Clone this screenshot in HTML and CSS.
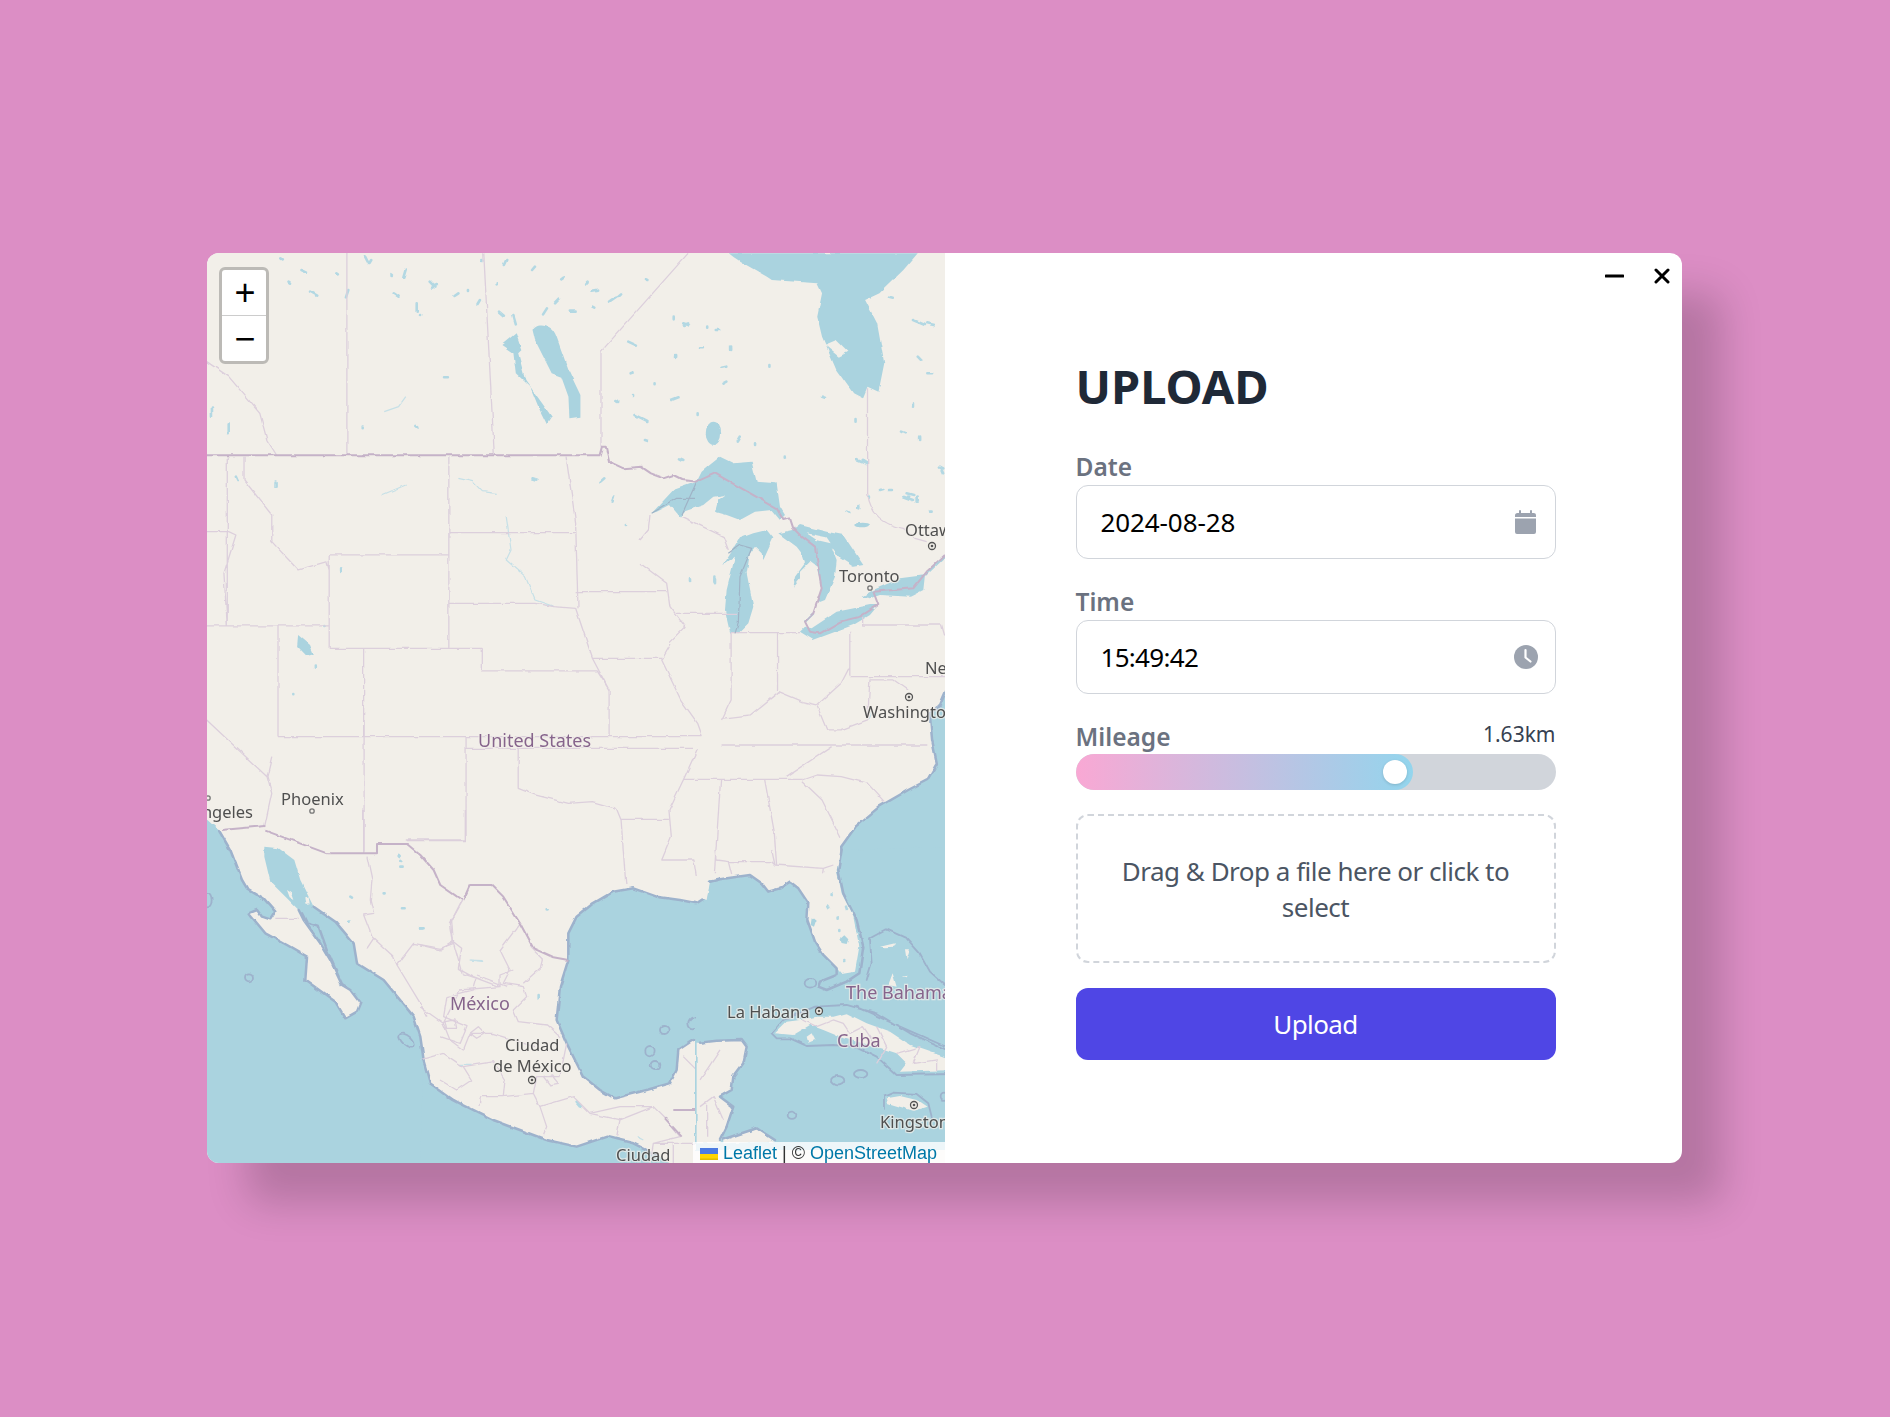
FILE: index.html
```html
<!DOCTYPE html>
<html lang="en">
<head>
<meta charset="utf-8">
<title>Upload</title>
<link rel="stylesheet" href="styles.css">
</head>
<body>
<main class="card">
  <section class="map">
    <svg class="map-svg" viewBox="207 253 738 910" width="738" height="910" xmlns="http://www.w3.org/2000/svg">
      <defs>
        <filter id="wobble" filterUnits="userSpaceOnUse" x="190" y="240" width="770" height="940" color-interpolation-filters="sRGB">
          <feTurbulence type="fractalNoise" baseFrequency=".09" numOctaves="2" seed="4" result="n"/>
          <feDisplacementMap in="SourceGraphic" in2="n" scale="3.500" xChannelSelector="R" yChannelSelector="G"/>
        </filter>
      </defs>
      <rect class="land" x="207" y="253" width="738" height="910"/>
      <g class="geo">
        <g transform="translate(200 240) scale(.4785 .3333)">
          <path class="dotlake" d="M345,50l8,22M360,60l-5,12M430,85l-5,25M480,125l12,18M405,160l10,10M310,150l-5,22M230,155l15,12M585,180l-5,12M625,215l10,12M655,225l5,25M725,205l-8,18M870,170l-15,15M810,125l-5,8M775,215l10,0M895,305l18,12M910,525l25,18M1020,250l-8,5M985,480l15,-8M905,465l0,3M1045,325l8,0M1100,380l-10,3M1385,660l8,8M1490,240l25,15M1520,250l15,5M1500,350l8,12M1520,400l10,0M1490,490l0,10M1505,590l0,10M1440,170l8,3M510,412l6,0M450,558l4,4M160,725l0,15M75,710l3,10M695,715l10,4M845,715l-8,10M865,770l-3,12M890,855l0,3M1075,1010l0,15M295,985l0,8M260,1158l0,3M240,1280l0,3M195,1362l0,1M1220,650l0,3M1400,770l0,3M1470,770l20,10M1550,690l3,10M210,90l12,8M185,125l3,3M285,100l3,3M170,55l3,3M495,135l-10,8M820,155l12,-3M750,175l-10,15M620,130l0,3M1010,250l12,6M1300,470l6,3M400,105l3,3M455,190l0,25M460,225l0,3M540,160l-8,8M560,150l0,3M590,60l0,3M640,60l-5,15M700,80l-6,10M760,110l-5,5M820,200l4,3M880,160l-6,8M930,120l5,3M990,230l0,8M1060,260l0,3M1110,320l0,10M1080,270l5,0M1240,110l0,3M1190,375l0,8M1100,425l-8,6M995,345l0,6M900,400l6,-3M870,480l4,3M950,430l0,3M1040,520l0,5M930,600l6,3M1160,610l0,5M1130,590l-6,15M1370,540l0,5M1465,575l8,5M1480,770l0,3M1440,750l6,0M1500,780l0,5M120,160l0,3M340,560l0,2M60,550l0,30M25,500l0,30"/>
          <path class="river" d="M540,715l30,10L590,755l30,5M380,765l50,-30M640,830l10,100L640,960l40,50L700,1080L740,1100M430,470l-15,30L385,515M1395,1440l10,-30"/>
          <path class="lake" d="M205,1185l25,30l8,28l-15,5l-20,-30Z"/>
          <path class="lake" d="M695,270C700,245 735,245 745,290L770,390L795,465L795,530L772,535L770,470L755,410L735,400L700,300Z"/>
          <path class="lake" d="M630,315L660,280L672,330L665,340L680,420L715,490L735,530L725,553L710,510L690,440L660,400L655,340Z"/>
          <ellipse class="lake" cx="1073" cy="580" rx="16" ry="35"/>
          <path class="lake" d="M1105,40C1130,70 1170,95 1195,120L1290,130L1300,160L1290,230L1300,290L1330,390L1365,460L1385,475L1395,440L1418,455L1430,370L1415,250L1390,180L1420,160L1470,90L1500,40Z"/>
          <path class="land" d="M1305,315l25,-15l25,35l-20,15Z"/>
          <g class="borders">
            <path d="M307,40V645M593,40L615,645M1020,40L838,335V620M1395,445V630M14,365L60,410L125,520L140,600L160,645"/>
            <path d="M57,650V1158M92,650V720L150,825V905L205,990L265,965L270,990M520,650V1225M520,878H785M520,1090H700L740,1100L785,1105M765,650L785,850L790,1105M785,1055H920M270,945H520M270,945V1225H590M14,875H60L75,885L50,1000L57,1158M14,1158H270M163,1158V1490M342,1225V1490M590,1225V1293H830L855,1350V1490M985,1210L965,1260L1005,1380L1040,1450L1050,1490M1110,1180V1380L1090,1440M1207,1178V1350M1358,1178V1310M1358,1310H1558M1090,1435L1150,1425L1210,1355L1260,1385L1290,1395L1340,1330L1358,1280M1290,1400L1310,1470L1340,1470L1395,1440L1400,1320L1450,1320L1480,1350M785,1105L820,1255L855,1350M820,1255H965"/>
          </g>
          <path class="frontier" d="M0,646H835L840,620L848,620L855,665L885,685L925,680"/>
        </g>
        <g transform="translate(640 450) scale(.3333)">
          <path class="lake" d="M35,190L100,120L170,95L185,65L240,20L280,40L335,35L350,95L410,100L420,170L435,195L420,210L395,180L345,185L300,210L260,195L225,185L235,150L255,135L220,140L190,165L130,185L120,200L90,165L50,185Z"/>
          <path class="lake" d="M250,345L300,265L340,250L380,240L400,265L370,330L365,310L345,290L330,310L320,370L340,470L325,520L295,550L270,545L255,480L260,420L285,320Z"/>
          <path class="lake" d="M415,250L460,240L480,225L560,245L610,255L670,345L640,350L600,325L575,290L590,330L585,380L555,450L530,460L545,415L530,350L510,335L480,365L480,385L460,410L465,380L495,340L485,310L470,290Z"/>
          <path class="land" d="M500,250L560,262L572,280L530,270Z"/>
          <path class="lake" d="M480,545L495,530L515,535L590,485L690,465L715,465L690,495L640,525L560,555L520,570Z"/>
          <path class="lake" d="M665,440L700,420L780,385L855,375L850,420L810,440L720,435L690,445Z"/>
          <path class="river-wide" d="M855,375L915,318M520,490L495,515"/>
          <ellipse class="lake" cx="668" cy="225" rx="22" ry="7"/>
          <path class="dotlake" d="M650,30l30,12M800,130l20,5M830,140l0,15M720,120l10,-3M870,185l5,0M620,185l5,3M900,50l10,5M655,165l0,10M225,385l0,15M150,385l0,8M120,25l10,5"/>
          <g class="borders">
            <path d="M683,0V130C690,190 730,225 790,235L825,265L860,275M125,200L250,260L265,300M30,195L25,240L0,270M0,340L80,400L90,470L135,530L90,575M0,425H80M110,490H295M270,548H480M668,500V525H905L915,560"/>
          </g>
          <path class="frontier" d="M0,50L30,70L70,85L100,75L130,90L170,95L225,70L410,175L430,210L450,205L460,235L480,255L525,290L545,415L530,460L520,490L495,515L510,545L540,550L600,515L660,500L715,465L700,425L820,415L860,365L915,315"/>
          <path class="frontier thin" d="M35,190L110,145H165M170,95L125,195M265,310L300,285L335,295L300,380L295,520L285,550"/>
        </g>
        <g transform="translate(200 720) scale(.4785 .3333)">
          <path class="fill-water" d="M1620,-90L1560,-90L1545,-40L1525,-20L1530,60L1540,130L1520,180L1480,210L1420,260L1370,320L1340,380L1341,400H1620Z"/>
          <path class="coast" d="M1560,-90L1545,-40L1525,-20L1530,60L1540,130L1520,180L1480,210L1420,260L1370,320L1340,380L1341,400"/>
          <g class="borders">
            <path d="M14,0L140,170L150,220M150,110L140,170L150,220L135,320M163,50H1050M343,0V395M556,50V360H430M556,85H860M665,85V205L700,225L770,250L820,245L870,265L880,300L885,400L890,495M880,298H980M1040,85L1010,180L980,270L985,350L965,420H1030L1035,465M860,85H1030M1010,178H1260M1088,178L1075,460M1180,178L1200,335L1205,435M1260,185L1300,240L1340,355M1260,180L1290,165L1340,170L1395,190L1430,245M1090,75H1520M1225,170L1320,80"/>
          </g>
        </g>
        <g transform="translate(207 810) scale(.3333)">
          <path class="fill-water" d="M-10,20L35,60L70,120L105,210L120,235L170,265L205,305L190,328L165,320L150,300L125,310L175,370L240,405L300,440L295,510L385,575L415,625L450,605L460,580L430,540L405,525L370,450L340,400L290,330L275,300L240,265L190,215L172,140L172,110L215,115L262,150L280,210L320,290L385,335L440,400L450,460L530,510L620,620L640,680L650,750L650,1100L-10,1100Z"/>
          <path class="land" d="M240,240L255,250L262,270L248,262ZM292,265L305,262L308,280L296,282Z"/>
          <path class="coast" d="M35,60L70,120L105,210L120,235L170,265L205,305L190,328L165,320L150,300L125,310L175,370L240,405L300,440L295,510L385,575L415,625L450,605L460,580L430,540L405,525L370,450L340,400L290,330L275,300M285,310L300,340L335,350L360,420L395,500M320,290L385,335L440,400L450,460L530,510L620,620L640,680L650,750"/>
          <ellipse class="ring" cx="126" cy="502" rx="12" ry="12"/>
          <ellipse class="ring" cx="600" cy="692" rx="28" ry="14" transform="rotate(40 600 692)"/>
          <ellipse class="ring" cx="2" cy="270" rx="12" ry="22"/>
          <path class="dotlake" d="M575,135l3,3M580,150l3,3M580,170l10,0M530,250l3,0M585,295l5,0M430,260l5,3M425,335l3,0M640,355l10,0"/>
          <path class="river" d="M785,450l45,5"/>
          <g class="borders">
            <path d="M470,0V130M775,0V92H600M480,140L495,210L490,270L500,310L470,315L495,380L560,440L570,465L640,580L660,620M500,385L480,415M765,270L730,340L740,400L700,415L620,400L570,465M740,400L765,490L810,505L800,540L720,560L710,620L780,650L760,700L700,680M205,325H275M810,495L900,530"/>
          </g>
          <path class="frontier" d="M45,60L175,48M175,62L360,130H510V102H600L640,135L680,180L700,225L765,270"/>
        </g>
        <g transform="translate(420 880) scale(.3333)">
          <path class="fill-water" d="M900,0L870,0L860,50L830,70L780,60L710,50L640,25L580,35L520,70L470,110L445,160L445,240L420,320L410,420L440,490L490,590L540,630L585,655L680,630L750,610L770,570L775,510L820,480L900,465Z"/>
          <path class="coast" d="M860,50L830,70L780,60L710,50L640,25L580,35L520,70L470,110L445,160L445,240L420,320L410,420L440,490L490,590L540,630L585,655L680,630L750,610L770,570L775,510L820,480"/>
          <path class="fill-water" d="M10,540L30,610L100,660L220,720L380,780L470,800L560,770L640,790L720,830L760,860L0,860Z"/>
          <path class="coast" d="M10,540L30,610L100,660L220,720L380,780L470,800L560,770L640,790L720,830"/>
          <ellipse class="ring" cx="820" cy="430" rx="15" ry="18"/>
          <ellipse class="ring" cx="733" cy="450" rx="13" ry="12"/>
          <ellipse class="ring" cx="690" cy="515" rx="14" ry="14"/>
          <ellipse class="ring" cx="705" cy="555" rx="13" ry="12"/>
          <path class="river" d="M148,240l40,2M120,553l35,0M650,770l20,10"/>
          <path class="dotlake" d="M356,345l0,10M0,145l8,0M380,88l3,0M470,665l12,14"/>
          <g class="borders">
            <path d="M130,60L95,120L100,185L60,210L0,195M100,185L125,205L115,265L160,290L240,320L240,285L280,270M300,130L240,210L270,270L250,310L310,320L320,350L280,390L295,425L380,435L420,470M365,260L370,240L330,200M365,260L310,310M0,380L70,430L90,480L130,510L150,460L215,460L280,480L345,500M70,430L120,330L240,320M0,540L70,520L130,560L155,600L110,630L60,600M130,560L220,545L255,600L250,650L185,650L180,675M250,650L340,640L360,680L380,740L370,765M340,640L350,590L420,590L440,490M360,680L460,650L510,700L600,720L590,770M510,700L600,680L700,680M600,720L700,680L740,720L780,770L700,790L690,850M850,590V690M790,530L850,590L900,530M850,690L880,650L900,650M150,460L175,440L195,460L170,475ZM75,425L105,420L110,445L80,445ZM370,590L395,585L415,610L390,615ZM850,690V790M880,650V790M760,790V850M700,790H850"/>
          </g>
          <path class="frontier" d="M130,60L150,15H215L250,50L300,130L340,205L400,232L445,240M735,715L785,770M760,690H850V790"/>
        </g>
        <g transform="translate(700 850) scale(.3333)">
          <path class="fill-water" d="M-15,165L0,160L20,150L30,95L60,88L150,75L185,100L205,125L240,115L270,95L295,115L325,160L322,210L345,275L370,315L410,355L425,372L465,365L478,290L460,200L425,130L410,60L425,0L760,-10L760,900L-15,900Z"/>
          <path class="land" d="M-5,140L20,150L30,95L0,100Z"/>
          <path class="lake" d="M433,256l12,12l-5,14l-15,-3l-5,-12ZM335,205l12,10l-5,15l-10,-5Z"/>
          <path class="dotlake" d="M395,130l0,3M410,200l0,6M415,240l0,3M385,170l3,5M438,170l3,10M430,330l3,0"/>
          <path class="land" d="M0,578L50,572L125,570L140,590L130,640L100,680L95,720L60,740L100,770L80,830L60,880L-10,880L-10,578Z"/>
          <path class="land" d="M70,868L170,838L225,875L70,880Z"/>
          <path class="land" d="M225,550L260,515L300,510L350,500L400,500L440,490L500,520L570,545L630,585L760,630L760,660L600,665L620,640L590,610L530,590L430,565L370,540L330,525L280,555Z"/>
          <path class="land" d="M320,560L335,550L345,570L325,578Z"/>
          <path class="land" d="M560,745L600,738L650,750L680,770L640,782L600,770L565,760Z"/>
          <path class="land" d="M540,290L585,280L580,290L555,292ZM615,295L630,295L620,328ZM565,405L578,370L590,410ZM605,380l15,-3l-3,5Z"/>
          <path class="coast" d="M0,578L50,572L125,570L140,590L130,640L100,680L95,720L60,740L100,770L80,830L60,870M70,868L170,835L225,870M30,95L60,88L150,75L185,100L205,125L240,115L270,95L295,115L325,160L322,210L345,275L370,315L410,355L410,375L360,395L355,410L380,420L440,395L478,370L490,290L470,210L430,130L415,60L425,0"/>
          <path class="coast thin" d="M500,390L515,340L510,265L560,238L620,265L660,310L690,365L735,405M215,550L250,510L345,470L440,465L530,490L630,550L760,610M470,470L600,530L760,600M215,550L230,565L270,565L320,588L400,585L470,590L530,620L590,675L760,672M552,780V740L580,728L650,732L685,760L695,800"/>
          <ellipse class="ring" cx="330" cy="400" rx="16" ry="13"/>
          <ellipse class="ring" cx="482" cy="672" rx="20" ry="12"/>
          <ellipse class="ring" cx="413" cy="692" rx="20" ry="14"/>
          <ellipse class="ring" cx="276" cy="796" rx="13" ry="11"/>
          <ellipse class="ring" cx="732" cy="742" rx="10" ry="11"/>
          <g class="borders">
            <path d="M45,0L48,30L85,35H215L225,45L370,55L400,45M85,35L95,75M215,0L225,45M370,55L368,70M310,510L350,530L400,510L430,520L450,550L490,530L530,590M530,530L560,590L530,640M590,610L660,590L640,640L710,630V660M0,690L60,600M0,770L40,740L70,810M20,860V760"/>
          </g>
        </g>
      </g>
      <g class="dots">
        <circle cx="932" cy="546" r="3.500"/><circle cx="909" cy="697" r="3.500"/><circle cx="532" cy="1080" r="3.500"/><circle cx="819" cy="1011" r="3.500"/><circle cx="914" cy="1105" r="3.500"/>
      </g>
      <g class="dots-in">
        <circle cx="932" cy="546" r="1.300"/><circle cx="909" cy="697" r="1.300"/><circle cx="532" cy="1080" r="1.300"/><circle cx="819" cy="1011" r="1.300"/><circle cx="914" cy="1105" r="1.300"/>
      </g>
      <g class="dots small">
        <circle cx="870" cy="588" r="2.200"/><circle cx="312" cy="811" r="2.200"/><circle cx="208" cy="798" r="2.200"/>
      </g>
      <g class="city">
        <text x="905" y="536">Ottawa</text>
        <text x="839" y="582">Toronto</text>
        <text x="925" y="674">New York</text>
        <text x="863" y="718">Washington</text>
        <text x="281" y="805">Phoenix</text>
        <text x="253" y="818" class="end">Los Angeles</text>
        <text x="505" y="1051">Ciudad</text>
        <text x="493" y="1072">de México</text>
        <text x="727" y="1018">La Habana</text>
        <text x="880" y="1128">Kingston</text>
        <text x="616" y="1161">Ciudad</text>
      </g>
      <g class="country">
        <text x="478" y="747">United States</text>
        <text x="450" y="1010">México</text>
        <text x="846" y="999">The Bahamas</text>
        <text x="837" y="1047">Cuba</text>
      </g>
    </svg>
    <div class="zoom">
      <div class="zoom-btn zoom-in">+</div>
      <div class="zoom-btn">−</div>
    </div>
    <div class="attribution"><svg class="flag" viewBox="0 0 18 12" width="18" height="12" xmlns="http://www.w3.org/2000/svg"><rect width="18" height="6" fill="#4C7BE1"/><rect y="6" width="18" height="6" fill="#FFD500"/><rect y="10.500" width="18" height="1.500" fill="#E0BC00"/></svg> <span class="link">Leaflet</span> | © <span class="link">OpenStreetMap</span></div>
  </section>

  <section class="panel">
    <div class="controls">
      <svg viewBox="0 0 19 4" width="19" height="4" xmlns="http://www.w3.org/2000/svg"><path d="M1 2H18" stroke="#000" stroke-width="3" stroke-linecap="round"/></svg>
      <svg viewBox="0 0 16 16" width="16" height="16" xmlns="http://www.w3.org/2000/svg"><path d="M2 2L14 14M14 2L2 14" stroke="#000" stroke-width="3" stroke-linecap="round"/></svg>
    </div>
    <form class="form">
      <h1 class="title">UPLOAD</h1>
      <div class="field">
        <div class="label">Date</div>
        <div class="input">
          <span class="date-text">2024-08-28</span>
          <span class="input-icon"><svg viewBox="0 0 21 24" width="21" height="24" xmlns="http://www.w3.org/2000/svg"><path fill="#9ca3af" d="M5 0a1 1 0 0 1 1 1v2h9V1a1 1 0 0 1 2 0v2h1.500A2.500 2.500 0 0 1 21 5.500V7H0V5.500A2.500 2.500 0 0 1 2.500 3H4V1a1 1 0 0 1 1-1ZM0 8.500h21V22a2 2 0 0 1-2 2H2a2 2 0 0 1-2-2Z"/></svg></span>
        </div>
      </div>
      <div class="field">
        <div class="label">Time</div>
        <div class="input">
          <span class="time-text">15:49:42</span>
          <span class="input-icon"><svg viewBox="0 0 24 24" width="24" height="24" xmlns="http://www.w3.org/2000/svg"><circle cx="12" cy="12" r="12" fill="#9ca3af"/><path d="M11.500 5V12.500L16.500 16.500" fill="none" stroke="#fff" stroke-width="2.200" stroke-linecap="round" stroke-linejoin="round"/></svg></span>
        </div>
      </div>
      <div class="field">
        <div class="label-row">
          <div class="label">Mileage</div>
          <div class="value">1.63km</div>
        </div>
        <div class="slider">
          <div class="slider-fill"><span class="thumb"></span></div>
        </div>
      </div>
      <div class="drop">Drag &amp; Drop a file here or click to select</div>
      <button class="submit" type="button">Upload</button>
    </form>
  </section>
</main>
</body>
</html>
```
FILE: styles.css
```css
* { box-sizing: border-box; }
html, body { height: 100%; }
body {
  margin: 0;
  padding: 0 1px 1px 0;
  background: #dc8ec5;
  display: flex;
  align-items: center;
  justify-content: center;
  font-family: "Noto Sans", "Open Sans", sans-serif;
}
.card {
  width: 1475px;
  height: 910px;
  display: flex;
  border-radius: 12px;
  overflow: hidden;
  background: #fff;
  box-shadow: 40px 40px 40px rgba(0, 0, 0, .18);
}
.map {
  position: relative;
  width: 738px;
  flex: none;
  overflow: hidden;
}
.map-svg {
  display: block;
  background: #f2efe9;
  filter: blur(.5px);
}
.geo { filter: url(#wobble); }
.land { fill: #f2efe9; }
.lake, .fill-water { fill: #aad3df; }
.dotlake { fill: none; stroke: #b3d8e3; stroke-width: 2.600px; stroke-linecap: round; vector-effect: non-scaling-stroke; }
.river { fill: none; stroke: #c6e0e7; stroke-width: 1.200px; stroke-linejoin: round; vector-effect: non-scaling-stroke; }
.river-wide { fill: none; stroke: #aad3df; stroke-width: 2.500px; vector-effect: non-scaling-stroke; }
.coast { fill: none; stroke: #9db2cc; stroke-width: 2.500px; stroke-linejoin: round; stroke-linecap: round; vector-effect: non-scaling-stroke; }
.coast.thin { stroke-width: 1.800px; }
.ring { fill: none; stroke: #9db2cc; stroke-width: 1.800px; vector-effect: non-scaling-stroke; }
.borders path { fill: none; stroke: #dccfdc; stroke-width: 1.300px; stroke-linejoin: round; vector-effect: non-scaling-stroke; }
.frontier { fill: none; stroke: #c5b2c8; stroke-width: 2px; stroke-linejoin: round; vector-effect: non-scaling-stroke; }
.frontier.thin { stroke: #9fb3c6; stroke-width: 1.200px; }
.dots circle { fill: #f2efe9; stroke: #555; stroke-width: 1.300px; }
.dots.small circle { stroke: #777; }
.dots-in circle { fill: #555; }
.city text, .country text {
  font-family: "Noto Sans", sans-serif;
  font-size: 16.500px;
  paint-order: stroke;
  stroke: #f2efe9;
  stroke-width: 2.500px;
  stroke-opacity: .7;
}
.city text { fill: #4f4f4f; }
.city text.end { text-anchor: end; }
.country text { fill: #86648c; font-size: 18px; }
.zoom {
  position: absolute;
  left: 12px;
  top: 14px;
  width: 50px;
  border: 3px solid #bcbab6;
  border-radius: 6px;
  background: #fff;
  overflow: hidden;
}
.zoom-btn {
  height: 45px;
  padding-left: 2px;
  display: flex;
  align-items: center;
  justify-content: center;
  font-family: "Liberation Sans", sans-serif;
  font-size: 36px;
  line-height: 1;
  color: #000;
}
.zoom-in { height: 46px; border-bottom: 1px solid #ccc; }
.attribution {
  position: absolute;
  right: 0;
  bottom: 0;
  height: 21px;
  width: 252px;
  padding-left: 7px;
  white-space: nowrap;
  background: rgba(255, 255, 255, .8);
  font-family: "Liberation Sans", sans-serif;
  font-size: 18px;
  line-height: 23px;
  color: #333;
}
.flag { vertical-align: -1px; }
.link { color: #0078a8; }
.panel {
  position: relative;
  flex: 1;
  padding: 109px 0 0 130.500px;
}
.controls {
  position: absolute;
  top: 15px;
  right: 12px;
  display: flex;
  align-items: center;
  gap: 30px;
}
.form {
  width: 480px;
  display: flex;
  flex-direction: column;
  gap: 28px;
}
.title {
  margin: 0 0 14px;
  font-size: 47px;
  line-height: 48px;
  font-weight: 700;
  color: #1f2937;
}
.field { display: flex; flex-direction: column; }
.label {
  margin-bottom: 3px;
  font-size: 24.500px;
  line-height: 30px;
  font-weight: 600;
  color: #6b7280;
}
.input {
  height: 74px;
  padding: 0 17px 0 24px;
  display: flex;
  align-items: center;
  justify-content: space-between;
  border: 1px solid #d1d5db;
  border-radius: 12px;
  font-size: 26px;
  color: #000;
}
.date-text { letter-spacing: -.1px; }
.time-text { letter-spacing: -.7px; }
.input-icon { width: 24px; display: flex; justify-content: center; }
.label-row {
  height: 32px;
  display: flex;
  justify-content: space-between;
  align-items: flex-start;
}
.label-row .label { margin: 0; line-height: 29px; }
.value { font-size: 21px; line-height: 24px; color: #374151; }
.slider {
  height: 36px;
  border-radius: 18px;
  background: #d1d5db;
  overflow: hidden;
}
.slider-fill {
  position: relative;
  width: 337px;
  height: 36px;
  border-radius: 18px;
  background: linear-gradient(90deg, #f9a8d4, #93d5ed);
}
.thumb {
  position: absolute;
  right: 6px;
  top: 6px;
  width: 24px;
  height: 24px;
  border-radius: 50%;
  background: #fff;
  box-shadow: 0 1px 3px rgba(0, 0, 0, .15);
}
.drop {
  margin-top: -4px;
  height: 149px;
  padding: 0 20px;
  display: flex;
  align-items: center;
  justify-content: center;
  text-align: center;
  border: 2px dashed #d1d5db;
  border-radius: 12px;
  font-size: 26px;
  letter-spacing: -.5px;
  line-height: 36px;
  color: #4b5563;
}
.submit {
  margin-top: -3px;
  height: 72px;
  border: 0;
  border-radius: 12px;
  background: #4f46e5;
  color: #fff;
  font-family: inherit;
  font-size: 26px;
  letter-spacing: -.6px;
}
```
